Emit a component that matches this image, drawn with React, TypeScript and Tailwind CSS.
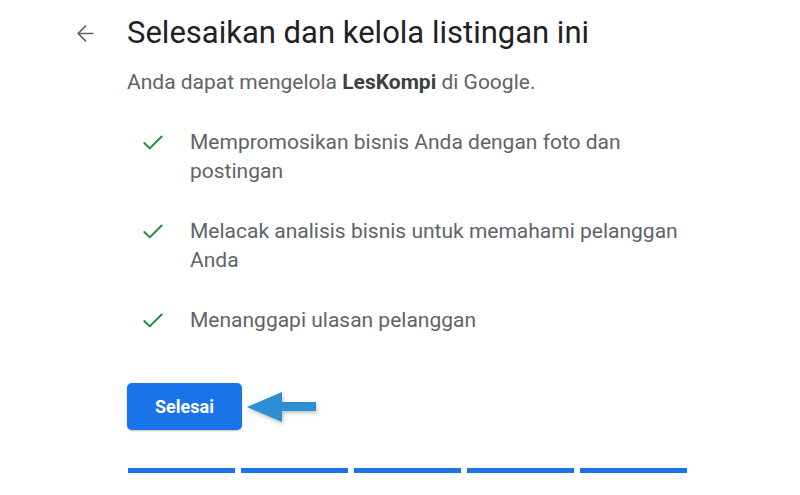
import { ArrowLeft, Check } from 'lucide-react';

const items = [
  'Mempromosikan bisnis Anda dengan foto dan postingan',
  'Melacak analisis bisnis untuk memahami pelanggan Anda',
  'Menanggapi ulasan pelanggan',
];

export default function App() {
  return (
    <div className="w-[800px] h-[495px] bg-white overflow-hidden font-['Roboto',sans-serif]">
      <div className="flex pl-[73px] pt-[14px]">
        {/* back */}
        <div className="w-[54px] pt-[7px]">
          <ArrowLeft className="w-[25px] h-[25px] text-[#5f6368]" strokeWidth={1.6} />
        </div>

        <div className="flex flex-col">
          <h1 className="text-[31px] leading-[38px] text-[#202124] font-normal">
            Selesaikan dan kelola listingan ini
          </h1>
          <p className="mt-[17px] text-[21px] leading-[26px] text-[#5f6368]">
            Anda dapat mengelola <span className="font-bold text-[#3c4043]">LesKompi</span> di Google.
          </p>

          <ul className="mt-[33px] flex flex-col gap-[31px]">
            {items.map((t) => (
              <li key={t} className="flex items-start">
                <Check className="w-[26px] h-[26px] ml-[13px] mt-[2px] text-[#1e8e3e] shrink-0" strokeWidth={1.8} />
                <span className="ml-[24px] w-[505px] text-[21px] leading-[29px] text-[#5f6368]">{t}</span>
              </li>
            ))}
          </ul>

          <div className="mt-[48px] flex items-center">
            <button className="w-[115px] h-[47px] rounded-[5px] bg-[#1a73e8] text-white text-[18px] font-bold shadow-[0_1px_2px_rgba(0,0,0,0.25)]">
              Selesai
            </button>
            <svg width="72" height="34" viewBox="0 0 72 34" className="ml-[4px] drop-shadow-[1px_2px_2px_rgba(0,0,0,0.25)]">
              <path d="M1 17 L36 2 L36 12 L70 12 L70 21 L36 21 L36 32 Z" fill="#2b8fd2" />
            </svg>
          </div>

          {/* progress */}
          <div className="mt-[38px] ml-[1px] flex gap-[6px]">
            {[0, 1, 2, 3, 4].map((i) => (
              <div key={i} className="w-[107px] h-[5px] bg-[#1a73e8]" />
            ))}
          </div>
        </div>
      </div>
    </div>
  );
}
